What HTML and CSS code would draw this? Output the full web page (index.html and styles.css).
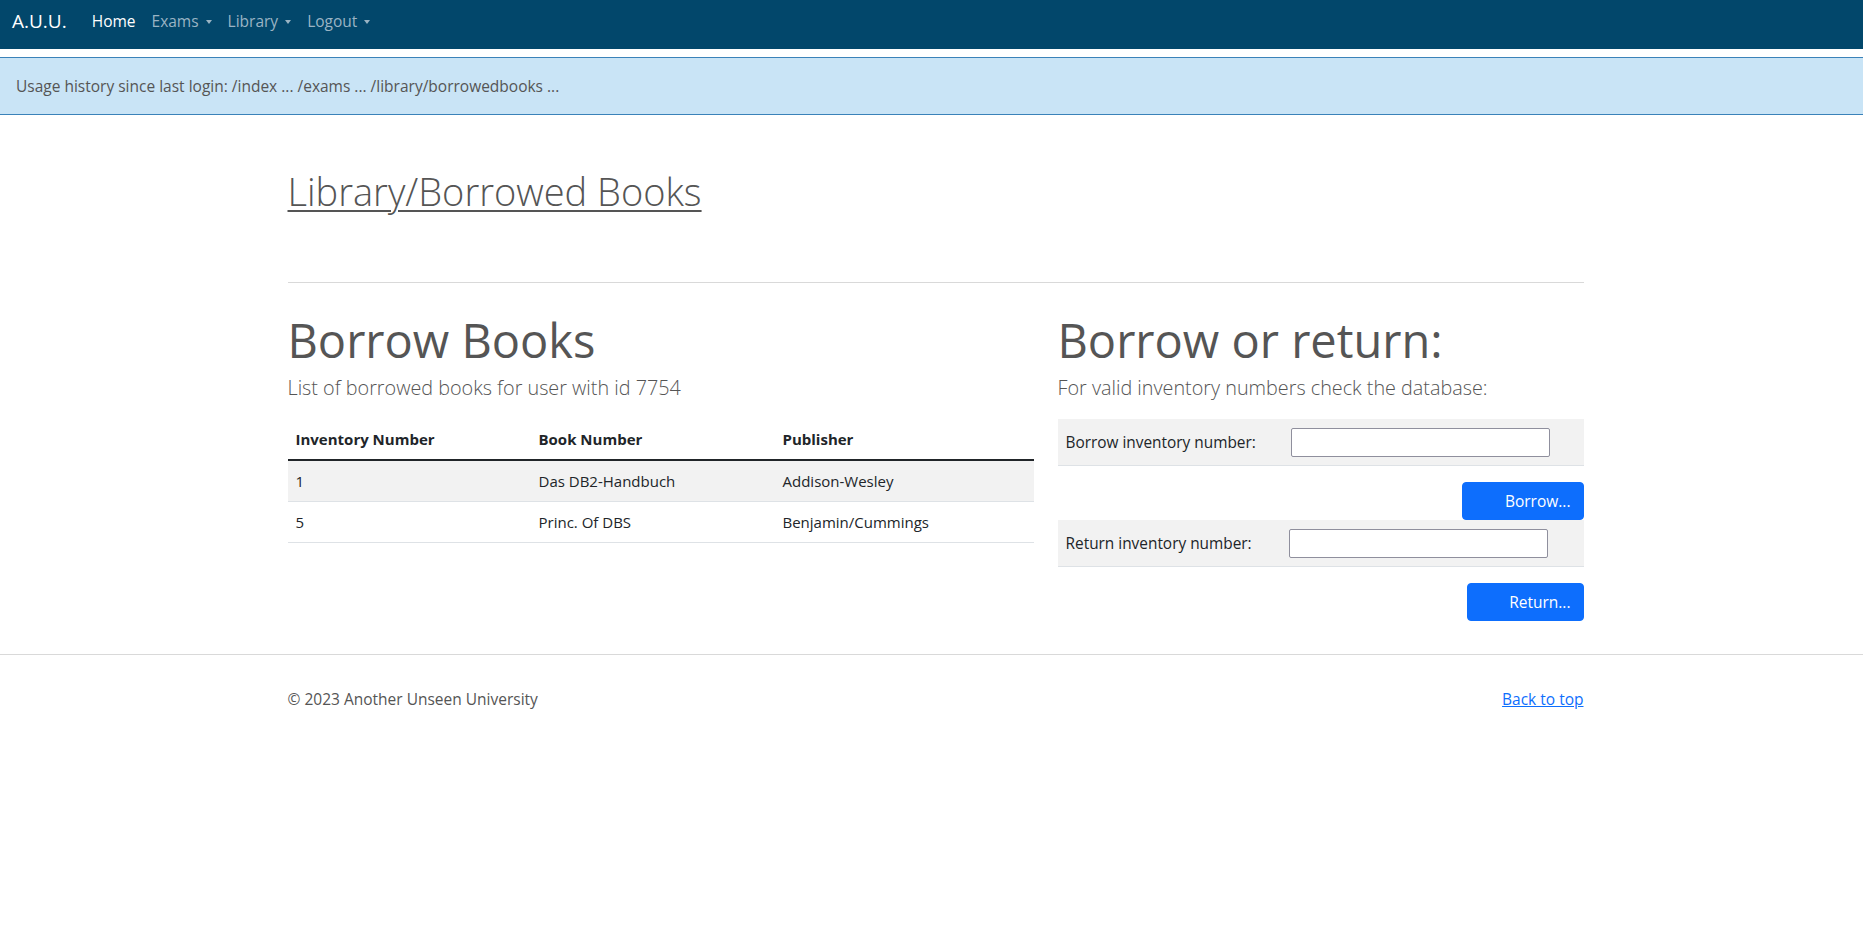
FILE: index.html
```html
<!DOCTYPE html>
<html lang="en">
<head>
<meta charset="utf-8">
<title>Library/Borrowed Books</title>
<link rel="stylesheet" href="styles.css">
</head>
<body>
<nav class="navbar">
  <a class="brand" href="#">A.U.U.</a>
  <ul class="nav">
    <li><a class="nav-link active" href="#">Home</a></li>
    <li><a class="nav-link toggle" href="#">Exams</a></li>
    <li><a class="nav-link toggle" href="#">Library</a></li>
    <li><a class="nav-link toggle" href="#">Logout</a></li>
  </ul>
</nav>
<div class="alert">Usage history since last login: /index ... /exams ... /library/borrowedbooks ...</div>
<main class="container">
  <h1 class="page-title"><a href="#">Library/Borrowed Books</a></h1>
  <hr class="divider">
  <div class="row">
    <section class="col-left">
      <h2 class="heading">Borrow Books</h2>
      <p class="lead">List of borrowed books for user with id 7754</p>
      <table class="table">
        <thead>
          <tr><th class="c1">Inventory Number</th><th class="c2">Book Number</th><th>Publisher</th></tr>
        </thead>
        <tbody>
          <tr class="striped"><td>1</td><td>Das DB2-Handbuch</td><td>Addison-Wesley</td></tr>
          <tr><td>5</td><td>Princ. Of DBS</td><td>Benjamin/Cummings</td></tr>
        </tbody>
      </table>
    </section>
    <section class="col-right">
      <h2 class="heading">Borrow or return:</h2>
      <p class="lead">For valid inventory numbers check the database:</p>
      <form class="form">
        <div class="form-row">
          <label class="form-label" for="borrow">Borrow inventory number:</label>
          <input class="form-input" id="borrow" type="text">
        </div>
        <div class="btn-row"><button class="btn btn-borrow" type="button">Borrow...</button></div>
        <div class="form-row">
          <label class="form-label form-label-return" for="ret">Return inventory number:</label>
          <input class="form-input" id="ret" type="text">
        </div>
        <div class="btn-row"><button class="btn btn-return" type="button">Return...</button></div>
      </form>
    </section>
  </div>
</main>
<footer class="footer">
  <div class="container footer-inner">
    <span>© 2023 Another Unseen University</span>
    <a href="#" class="back">Back to top</a>
  </div>
</footer>
</body>
</html>
```
FILE: styles.css
```css
* { box-sizing: border-box; }
body {
  margin: 0;
  font-family: "Open Sans", "Noto Sans", sans-serif;
  font-size: 16px;
  color: #555;
  background: #fff;
}
a { color: inherit; }

.navbar {
  height: 49px;
  background: #02476b;
  display: flex;
  align-items: center;
  padding: 0 12px 7px;
}
.brand {
  color: #fff;
  text-decoration: none;
  font-size: 19px;
  margin-right: 17px;
}
.nav {
  list-style: none;
  margin: 0;
  padding: 0;
  display: flex;
}
.nav-link {
  display: block;
  padding: 0 8px;
  color: #9ab4c4;
  text-decoration: none;
  font-size: 15.5px;
}
.nav-link.active { color: #fff; }
.toggle::after {
  content: "";
  display: inline-block;
  margin-left: 7px;
  vertical-align: 3px;
  border-top: 4px solid #9ab4c4;
  border-left: 3.5px solid transparent;
  border-right: 3.5px solid transparent;
}

.alert {
  margin-top: 8px;
  height: 58px;
  background: #c9e4f6;
  border-top: 1px solid #3a82b9;
  border-bottom: 1px solid #3a82b9;
  padding: 0 16px;
  display: flex;
  align-items: center;
  font-size: 15.5px;
  color: #555;
}

.container {
  width: 1296px;
  margin-left: calc(50% - 644px);
}
main.container { padding-top: 51px; }

.page-title {
  margin: 0;
  font-size: 38px;
  font-weight: 300;
  line-height: 50px;
}
.page-title a { color: #555; text-decoration-thickness: 1.5px; text-underline-offset: 4px; }

.divider {
  margin: 66px 0 0;
  border: 0;
  border-top: 1px solid #d9d9d9;
}

.row {
  display: grid;
  grid-template-columns: 746px 526px;
  gap: 24px;
  margin-top: 27px;
}

.heading {
  margin: 0;
  font-size: 47px;
  font-weight: 400;
  line-height: 60px;
  color: #555;
}
.lead {
  margin: 4px 0 17px;
  font-size: 19.8px;
  font-weight: 300;
  line-height: 28px;
  color: #555;
}

.table {
  width: 100%;
  border-collapse: collapse;
  color: #212529;
  font-size: 15px;
}
.table th, .table td {
  text-align: left;
  padding: 8px;
  line-height: 24px;
  border-bottom: 1px solid #dee2e6;
}
.table th { font-weight: 700; border-bottom: 2px solid #212529; }
.table .c1 { width: 243px; }
.table .c2 { width: 244px; }
.striped td { background: #f2f2f2; }

.form-row {
  display: flex;
  align-items: center;
  height: 47px;
  background: #f2f2f2;
  border-bottom: 1px solid #dee2e6;
  padding-left: 8px;
  color: #212529;
  font-size: 15.4px;
}
.form-label { width: 225px; }
.form-label-return { width: 223px; }
.form-input {
  width: 259px;
  height: 29px;
  border: 1px solid #8f8f9d;
  border-radius: 2px;
  background: #fff;
  font: inherit;
}
.btn-row {
  display: flex;
  justify-content: flex-end;
  padding-top: 16px;
}
.btn {
  height: 38px;
  background: #0d6efd;
  border: 1px solid #0d6efd;
  border-radius: 4px;
  color: #fff;
  font-family: inherit;
  font-size: 15.5px;
  text-align: right;
  padding: 0 12px 0 0;
}
.btn-borrow { width: 122px; }
.btn-return { width: 117px; }

.footer {
  margin-top: 33px;
  border-top: 1px solid #d9d9d9;
  padding-top: 32px;
}
.footer-inner {
  display: flex;
  justify-content: space-between;
  line-height: 24px;
  font-size: 15.5px;
  color: #555;
}
.back { color: #0d6efd; }
```
